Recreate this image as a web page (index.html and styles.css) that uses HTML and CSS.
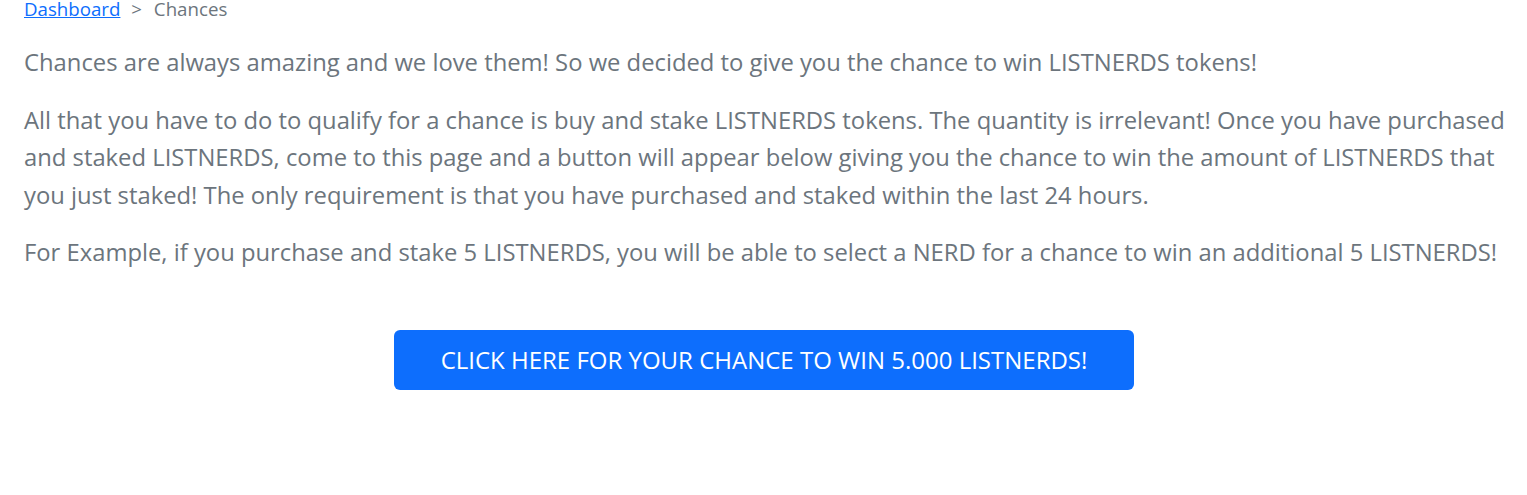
FILE: index.html
```html
<!DOCTYPE html>
<html lang="en">
<head>
    <meta charset="UTF-8">
    <meta name="viewport" content="width=device-width, initial-scale=1.0">
    <title>Chances</title>
    <link rel="stylesheet" href="styles.css">
</head>
<body>

<div class="page">
    <nav class="breadcrumb">
        <a href="#">Dashboard</a>
        <span class="sep">&gt;</span>
        <span class="current">Chances</span>
    </nav>

    <p class="lead">Chances are always amazing and we love them! So we decided to give you the chance to win LISTNERDS tokens!</p>
    <p class="lead">All that you have to do to qualify for a chance is buy and stake LISTNERDS tokens. The quantity is irrelevant! Once you have purchased and staked LISTNERDS, come to this page and a button will appear below giving you the chance to win the amount of LISTNERDS that you just staked! The only requirement is that you have purchased and staked within the last 24 hours.</p>
    <p class="lead">For Example, if you purchase and stake 5 LISTNERDS, you will be able to select a NERD for a chance to win an additional 5 LISTNERDS!</p>

    <div class="actions">
        <button class="btn-chance">CLICK HERE FOR YOUR CHANCE TO WIN 5.000 LISTNERDS!</button>
    </div>
</div>

</body>
</html>
```

FILE: styles.css
```css
body {
    margin: 0;
    background-color: #fff;
    font-family: "Segoe UI", "Open Sans", sans-serif;
    color: #6c757d;
}

.page {
    padding: 0 10px 0 24px;
    margin-top: -6px;
}

.breadcrumb {
    font-size: 18.7px;
    line-height: 30px;
    margin-bottom: 20px;
}

.breadcrumb a {
    color: #0d6efd;
    text-decoration: underline;
}

.breadcrumb .sep {
    margin: 0 7px 0 6px;
}

.lead {
    font-size: 23.8px;
    line-height: 37.5px;
    margin: 0 0 20px 0;
}

.actions {
    display: flex;
    justify-content: center;
    margin: 58px 0 0 -13px;
}

.btn-chance {
    background-color: #0d6efd;
    color: #fff;
    border: none;
    border-radius: 6px;
    height: 60px;
    width: 740px;
    font-family: inherit;
    font-size: 24px;
    cursor: pointer;
}
```
